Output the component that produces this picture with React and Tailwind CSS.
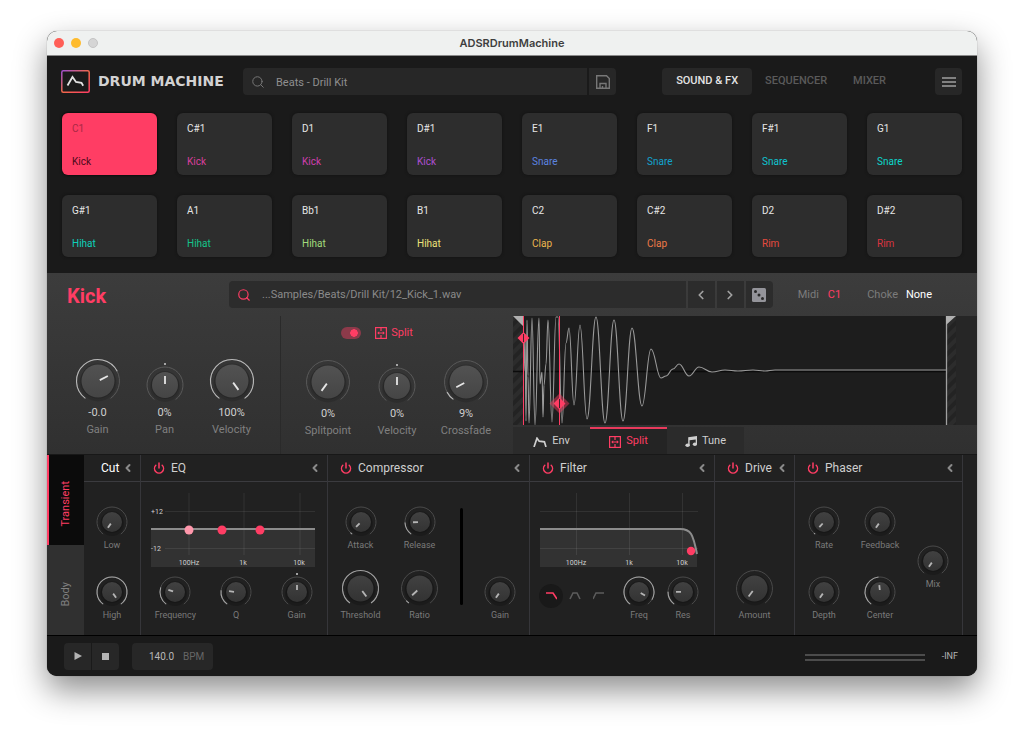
import React, { useState } from 'react'
import { Search, ChevronLeft, ChevronRight, Power } from 'lucide-react'

const pads = [
  { note: 'C1', name: 'Kick', color: 'text-[#4a0a1a]' },
  { note: 'C#1', name: 'Kick', color: 'text-[#d93f9c]' },
  { note: 'D1', name: 'Kick', color: 'text-[#cf3fae]' },
  { note: 'D#1', name: 'Kick', color: 'text-[#ae4fd0]' },
  { note: 'E1', name: 'Snare', color: 'text-[#5b84e0]' },
  { note: 'F1', name: 'Snare', color: 'text-[#12a3cf]' },
  { note: 'F#1', name: 'Snare', color: 'text-[#0fc3d0]' },
  { note: 'G1', name: 'Snare', color: 'text-[#0cd6cb]' },
  { note: 'G#1', name: 'Hihat', color: 'text-[#0ed0bb]' },
  { note: 'A1', name: 'Hihat', color: 'text-[#14c48a]' },
  { note: 'Bb1', name: 'Hihat', color: 'text-[#a2dc7c]' },
  { note: 'B1', name: 'Hihat', color: 'text-[#ece27a]' },
  { note: 'C2', name: 'Clap', color: 'text-[#ecb54e]' },
  { note: 'C#2', name: 'Clap', color: 'text-[#ee7a48]' },
  { note: 'D2', name: 'Rim', color: 'text-[#e64a3e]' },
  { note: 'D#2', name: 'Rim', color: 'text-[#dc3440]' },
]

// turning points of the sample, joined by smooth half waves
const wavePoints = [
  [11, 55], [12, 20], [13, 105], [14, 4], [15, 60], [16, 107], [19, 2], [22, 109], [26, 2],
  [27, 68], [29, 56], [30, 101], [31, 69], [33, 48], [35, 4], [39, 106], [43, 1], [45, 1], [49, 107],
  [53, 27], [56, 12], [61, 89], [67, 9], [74, 103], [83, 1], [92, 107], [101, 4], [110, 105],
  [119, 12], [129, 90], [138, 33], [148, 62], [153, 60], [160, 53], [166, 48], [176, 60],
  [186, 51], [199, 56], [212, 54], [225, 55], [240, 54], [252, 55], [262, 54], [433, 54],
]

const wavePath = wavePoints.reduce((d, [x, y], i) => {
  if (i === 0) return `M${x} ${y}`
  const [px, py] = wavePoints[i - 1]
  const h = (x - px) * 0.42
  return `${d}C${px + h} ${py} ${x - h} ${y} ${x} ${y}`
}, '')

const polar = (c, r, deg) => {
  const a = (deg * Math.PI) / 180
  return [c + r * Math.sin(a), c - r * Math.cos(a)]
}

const arc = (c, r, from, to) => {
  const [x1, y1] = polar(c, r, from)
  const [x2, y2] = polar(c, r, to)
  return `M${x1} ${y1}A${r} ${r} 0 ${to - from > 180 ? 1 : 0} 1 ${x2} ${y2}`
}

const knobSizes = {
  lg: { box: 46, r: 21.5, disc: 16.5, from: 2, to: 11 },
  md: { box: 38, r: 18, disc: 13, from: 1, to: 9 },
  panelLg: { box: 39, r: 18, disc: 13, from: 3, to: 10 },
  panel: { box: 32, r: 15, disc: 10, from: 2, to: 7 },
}

const Knob = ({ label, initial = 0, size = 'panel', bipolar = false, readout }) => {
  const [value, setValue] = useState(initial)
  const { box, r, disc, from, to } = knobSizes[size]
  const c = box / 2
  const angle = -144 + value * 288
  const [x1, y1] = polar(c, from, angle)
  const [x2, y2] = polar(c, to, angle)
  const main = size === 'lg' || size === 'md'

  return (
    <label className="relative flex flex-col items-center">
      <svg width={box} height={box} className="overflow-visible">
        <circle cx={c} cy={c + 2} r={disc + 2} fill="#000" opacity={main ? 0.12 : 0.18} />
        <circle cx={c} cy={c} r={disc + 1} fill="#000" opacity="0.15" />
        <path d={arc(c, r, -144, 144)} fill="none" stroke={main ? '#595959' : '#4a4a4a'} strokeWidth="1" />
        {!bipolar && value > 0.01 && (
          <path d={arc(c, r, -144, angle)} fill="none" stroke={main ? '#b8b8b8' : '#a2a2a2'} strokeWidth="1.1" />
        )}
        {bipolar && <circle cx={c} cy={c - r - 3} r="1" fill="#ccc" />}
        <circle cx={c} cy={c} r={disc} fill={main ? 'url(#knobMain)' : 'url(#knobPanel)'} />
        <line x1={x1} y1={y1} x2={x2} y2={y2} stroke={main ? '#e6e6e6' : '#b5b5b5'} strokeWidth="1.8" />
      </svg>
      <input
        type="range"
        min="0"
        max="1"
        step="0.01"
        value={value}
        onChange={(e) => setValue(Number(e.target.value))}
        className="sr-only"
      />
      {readout && <span className="text-[11px] leading-[17px] text-[#cfcfcf]">{readout(value)}</span>}
      <span className={main ? 'text-[11px] leading-[17px] text-[#808080]' : 'text-[9px] leading-[14px] text-[#7a7a7a]'}>
        {label}
      </span>
    </label>
  )
}

const SplitIcon = () => (
  <svg width="12" height="12" viewBox="0 0 12 12" fill="none" stroke="currentColor">
    <rect x="0.6" y="0.6" width="10.8" height="10.8" strokeWidth="1.2" />
    <path d="M6 1v3M6 8v3M3 6h6" strokeWidth="1.2" />
    <path d="M2.2 6 4.2 4.2v3.6zM9.8 6 7.8 4.2v3.6z" fill="currentColor" stroke="none" />
  </svg>
)

const EnvIcon = () => (
  <svg width="14" height="10" viewBox="0 0 14 10" fill="none" stroke="currentColor" strokeWidth="1.7">
    <path d="M1 10 4 1.2 6.2 4.2 11.4 4.8 13 10" />
  </svg>
)

const TuneIcon = () => (
  <svg width="12" height="11" viewBox="0 0 12 11" fill="currentColor">
    <path d="M3.2 1.2 12 0v8.2h-1.3V3.4L4.6 4.2v5H3.2z" />
    <ellipse cx="2.6" cy="9.2" rx="2.2" ry="1.8" />
    <ellipse cx="9.9" cy="8.3" rx="2.1" ry="1.8" />
  </svg>
)

const Panel = ({ title, power = true, children }) => {
  const [on, setOn] = useState(true)
  return (
    <section className="flex flex-col border-r border-[#36363a]">
      <header className="flex h-[27px] items-center border-b border-[#3b3b3f] pr-[10px]">
        {power ? (
          <button
            aria-label={`${title} power`}
            onClick={() => setOn(!on)}
            className={on ? 'ml-3 mr-[6px] text-[#ff3d64]' : 'ml-3 mr-[6px] text-[#666]'}
          >
            <Power size={12} strokeWidth={3} />
          </button>
        ) : (
          <span className="w-[17px]" />
        )}
        <h2 className={power ? 'flex-1 text-[12px] text-[#cfcfcf]' : 'flex-1 text-[12px] text-white'}>{title}</h2>
        <button aria-label={`Collapse ${title}`} className="-mr-1 text-[#8a8a8a]">
          <ChevronLeft size={12} strokeWidth={4} />
        </button>
      </header>
      {children}
    </section>
  )
}

const GraphText = ({ x, y, children }) => (
  <text x={x} y={y} textAnchor="middle" fontSize="7" fill="#d0d0d0">
    {children}
  </text>
)

const EqGraph = () => (
  <svg viewBox="0 0 164 76" className="ml-[10px] mt-[9px] h-[76px] w-[164px] overflow-visible">
    <rect y="38" width="164" height="38" fill="#323232" />
    <path d="M38 2v62M93 2v62M149 2v62M14 20.5H164M14 57.5H164" stroke="#fff" strokeOpacity="0.08" />
    <path d="M0 38H164" stroke="#8c8c8c" strokeWidth="2" />
    <circle cx="38" cy="39" r="4.5" fill="#ff97ab" />
    <circle cx="71" cy="39" r="4.5" fill="#ff3d64" />
    <circle cx="109" cy="39" r="4.5" fill="#ff3d64" />
    <GraphText x="6" y="23">+12</GraphText>
    <GraphText x="5" y="60">-12</GraphText>
    <GraphText x="38" y="74">100Hz</GraphText>
    <GraphText x="92" y="74">1k</GraphText>
    <GraphText x="148" y="74">10k</GraphText>
  </svg>
)

const FilterGraph = () => (
  <svg viewBox="0 0 158 76" className="ml-[10px] mt-[9px] h-[76px] w-[158px] overflow-visible">
    <path d="M0 38H140C151 38 153 43 157 63V76H0Z" fill="#323232" />
    <path d="M36.5 2v62M89.5 2v62M142.5 2v62M0 20.5H158M0 57.5H158" stroke="#fff" strokeOpacity="0.08" />
    <path d="M0 38H140C151 38 153 43 157 63" fill="none" stroke="#8c8c8c" strokeWidth="2" />
    <circle cx="151" cy="60" r="4.2" fill="#ff3d64" />
    <GraphText x="36" y="74">100Hz</GraphText>
    <GraphText x="89" y="74">1k</GraphText>
    <GraphText x="142" y="74">10k</GraphText>
  </svg>
)

const filterTypes = [
  { name: 'Low pass', d: 'M1 2h7l4 6' },
  { name: 'Band pass', d: 'M1 8l3-6h4l3 6' },
  { name: 'High pass', d: 'M0 8l3-6h8' },
]

const FilterTypes = () => {
  const [active, setActive] = useState('Low pass')
  return (
    <div className="mt-[17px] flex">
      {filterTypes.map((t) => (
        <button
          key={t.name}
          aria-label={t.name}
          onClick={() => setActive(t.name)}
          className={
            active === t.name
              ? 'flex size-6 items-center justify-center rounded-full bg-[#191919] text-[#ff3d64]'
              : 'flex size-6 items-center justify-center rounded-full text-[#5c5c5c]'
          }
        >
          <svg width="12" height="10" viewBox="0 0 12 10" fill="none" stroke="currentColor" strokeWidth="1.6">
            <path d={t.d} />
          </svg>
        </button>
      ))}
    </div>
  )
}

const Header = () => {
  const [view, setView] = useState('SOUND & FX')
  return (
    <div className="flex items-center px-[15px]">
      <svg width="29" height="23" viewBox="0 0 29 23" fill="none" className="-ml-px">
        <rect x="0.8" y="0.8" width="27.4" height="21.4" rx="1.5" stroke="url(#logoEdge)" strokeWidth="1.5" />
        <path d="M6.5 15.5 11.5 7l3.5 5 5.500.8 1.700 3" stroke="#e2e2e2" strokeWidth="1.8" />
      </svg>
      <h1 className="ml-2 w-[145px] whitespace-nowrap font-['DejaVu_Sans'] text-[14px] font-bold text-[#d2d2d2]">
        DRUM MACHINE
      </h1>
      <div className="flex h-[27px] flex-1 items-center rounded-l bg-[#272727] pl-2">
        <Search size={14} strokeWidth={1.7} className="text-[#777]" />
        <input
          aria-label="Preset"
          defaultValue="Beats - Drill Kit"
          className="ml-[11px] h-full min-w-0 flex-1 bg-transparent pt-px text-[11px] text-[#8f8f8f] outline-none"
        />
      </div>
      <button aria-label="Save" className="ml-0.5 flex h-[27px] w-[27px] items-center justify-center rounded-r bg-[#272727] text-[#777]">
        <svg width="14" height="14" viewBox="0 0 14 14" fill="none" stroke="currentColor" strokeWidth="1.4">
          <path d="M.7.7h9.800l2.800 2.800v9.800H.7zM4 13V8.500h6V13M6.500 13v-2" />
        </svg>
      </button>
      <nav className="ml-[46px] flex">
        {['SOUND & FX', 'SEQUENCER', 'MIXER'].map((v) => (
          <button
            key={v}
            onClick={() => setView(v)}
            className={
              view === v
                ? 'h-[27px] rounded bg-[#272727] px-[14px] text-[11px] font-medium text-[#e4e4e4]'
                : 'h-[27px] rounded px-[13px] text-[11px] font-medium text-[#5a5a5a]'
            }
          >
            {v}
          </button>
        ))}
      </nav>
      <button aria-label="Menu" className="ml-9 flex h-[27px] w-[27px] items-center justify-center rounded bg-[#272727] text-[#a0a0a0]">
        <svg width="14" height="10" viewBox="0 0 14 10" stroke="currentColor" strokeWidth="1.3">
          <path d="M0 1h14M0 5h14M0 9h14" />
        </svg>
      </button>
    </div>
  )
}

const Waveform = () => (
  <svg viewBox="0 0 464 109" preserveAspectRatio="none" className="block h-[109px] w-full bg-[#1d1d1d]">
    <defs>
      <pattern id="hatch" width="8" height="8" patternUnits="userSpaceOnUse" patternTransform="rotate(45)">
        <rect width="8" height="8" fill="#232323" />
        <rect width="4" height="8" fill="#2c2c2c" />
      </pattern>
    </defs>
    <rect width="10" height="109" fill="url(#hatch)" />
    <rect x="433" width="10" height="109" fill="url(#hatch)" />
    <rect x="443" width="21" height="109" fill="#262626" />
    <path d="M0 55.5H433" stroke="#0b0b0b" strokeWidth="1.5" />
    <path d={wavePath} fill="none" stroke="#9a9a9a" strokeWidth="1.1" />
    <path d="M433.5 0V109" stroke="#a0a0a0" strokeWidth="1.3" />
    <path d="M0 0H10V10ZM433 0h10l-10 9Z" fill="#b0b0b0" />
    <path d="M10.5 0V109M46.5 0V109" stroke="#ff3d64" strokeWidth="1" />
    <path d="M46.5 77.5l10 10-10 10-10-10Z" fill="#ff3d64" opacity="0.45" />
    <path d="M10.5 16l6 6-6 6-6-6ZM46.5 81.5l6 6-6 6-6-6Z" fill="#ff3d64" />
    <path d="M10.5 18v8M46.5 83v9" stroke="#40202a" strokeWidth="1" />
  </svg>
)

const SampleSection = () => {
  const [split, setSplit] = useState(true)
  const [tab, setTab] = useState('Split')
  const tabs = [
    { name: 'Env', icon: <EnvIcon /> },
    { name: 'Split', icon: <SplitIcon /> },
    { name: 'Tune', icon: <TuneIcon /> },
  ]
  const percent = (v) => `${Math.round(v * 100)}%`
  const centred = (v) => `${Math.round((v - 0.5) * 200)}%`

  return (
    <div className="bg-linear-to-b from-[#3c3c3c] to-[#303030]">
      <div className="flex h-[43px] items-center pl-5 pr-11">
        <h2 className="w-[162px] pt-0.5 text-[20px] font-bold text-[#ff3d64]">Kick</h2>
        <div className="flex h-[27px] flex-1 items-center rounded-l bg-[#2c2c2c] pl-2">
          <Search size={14} strokeWidth={2} className="text-[#ff3d64]" />
          <input
            aria-label="Sample"
            defaultValue="...Samples/Beats/Drill Kit/12_Kick_1.wav"
            className="ml-[11px] h-full min-w-0 flex-1 bg-transparent text-[11px] text-[#8a8a8a] outline-none"
          />
        </div>
        <button aria-label="Previous sample" className="ml-0.5 flex h-[27px] w-[27px] items-center justify-center bg-[#2c2c2c] text-[#a0a0a0]">
          <ChevronLeft size={14} strokeWidth={3} />
        </button>
        <button aria-label="Next sample" className="ml-0.5 flex h-[27px] w-[27px] items-center justify-center bg-[#2c2c2c] text-[#a0a0a0]">
          <ChevronRight size={14} strokeWidth={3} />
        </button>
        <button aria-label="Random sample" className="ml-0.5 flex h-[27px] w-[27px] items-center justify-center rounded-r bg-[#2c2c2c]">
          <svg width="14" height="14" viewBox="0 0 14 14" fill="#2a2a2a">
            <rect width="14" height="14" rx="1.5" fill="#94949a" />
            <circle cx="3.5" cy="3.5" r="1.5" />
            <circle cx="7" cy="7" r="1.5" />
            <circle cx="10.5" cy="10.5" r="1.5" />
          </svg>
        </button>
        <div className="flex items-center pt-0.5 text-[11px]">
          <span className="ml-[25px] text-[#7c7c7c]">Midi</span>
          <button className="ml-[9px] text-[#ff3d64]">C1</button>
          <label htmlFor="choke" className="ml-[26px] text-[#7c7c7c]">Choke</label>
          <select id="choke" className="ml-2 appearance-none bg-transparent text-white">
            <option>None</option>
            <option>1</option>
            <option>2</option>
          </select>
        </div>
      </div>
      <div className="grid h-[138px] grid-cols-[233fr_233fr_464fr]">
        <div className="flex items-end justify-center pb-4 pl-0.5">
          <div className="grid grid-cols-[67px_67px_67px] items-end">
            <Knob label="Gain" initial={0.72} size="lg" readout={(v) => (v === 0.72 ? '-0.0' : ((v - 0.72) * 40).toFixed(1))} />
            <Knob label="Pan" initial={0.5} size="md" bipolar readout={centred} />
            <Knob label="Velocity" initial={1} size="lg" readout={percent} />
          </div>
        </div>
        <div className="flex flex-col items-center justify-between border-l border-[#2a2a2a] pb-[15px] pt-[9px]">
          <div className="-ml-10 flex items-center gap-[14px]">
            <input
              id="split"
              type="checkbox"
              checked={split}
              onChange={() => setSplit(!split)}
              className="h-3 w-5 appearance-none rounded-full bg-[#8c3a4a] bg-[radial-gradient(circle_at_13px_6px,#ff3d64_3.5px,transparent_4px)] not-checked:bg-[#555]"
            />
            <label htmlFor="split" className="flex items-center gap-1 text-[11px] text-[#ff3d64]">
              <SplitIcon /> Split
            </label>
          </div>
          <div className="grid grid-cols-[69px_69px_69px] items-end">
            <Knob label="Splitpoint" size="lg" readout={percent} />
            <Knob label="Velocity" initial={0.5} size="md" bipolar readout={centred} />
            <Knob label="Crossfade" initial={0.09} size="lg" readout={percent} />
          </div>
        </div>
        <div className="flex flex-col">
          <Waveform />
          <div className="mt-0.5 flex flex-1">
            {tabs.map((t) => (
              <button
                key={t.name}
                onClick={() => setTab(t.name)}
                className={
                  tab === t.name
                    ? 'flex w-[77px] items-center justify-center gap-[5px] border-t-2 border-[#e83a5c] bg-[#242424] text-[11px] text-[#ff3d64]'
                    : 'flex w-[77px] items-center justify-center gap-[5px] border-t-2 border-transparent bg-[#2b2b2b] text-[11px] text-[#cfcfcf]'
                }
              >
                {t.icon}
                {t.name}
              </button>
            ))}
          </div>
        </div>
      </div>
    </div>
  )
}

const Effects = () => {
  const [layer, setLayer] = useState('Transient')
  return (
    <div className="flex h-[182px] border-y border-t-[#181818] border-b-black bg-[#212121]">
      <div className="flex w-[37px] flex-col">
        {['Transient', 'Body'].map((l) => (
          <button
            key={l}
            onClick={() => setLayer(l)}
            className={
              layer === l
                ? 'flex flex-1 items-center justify-center border-l-2 border-[#ff3d64] bg-[#0b0b0b] pt-2 text-[11px] text-[#ff3d64]'
                : 'flex flex-1 items-center justify-center border-l-2 border-transparent bg-[#303030] pt-2 text-[11px] text-[#808080]'
            }
          >
            <span className="rotate-180 [writing-mode:vertical-rl]">{l}</span>
          </button>
        ))}
      </div>
      <div className="grid flex-1 grid-cols-[57fr_187fr_202fr_185fr_80fr_168fr_14fr]">
        <Panel title="Cut" power={false}>
          <div className="flex flex-1 flex-col justify-between pb-[13px] pt-6">
            <Knob label="Low" />
            <Knob label="High" initial={1} />
          </div>
        </Panel>
        <Panel title="EQ">
          <EqGraph />
          <div className="mt-[9px] grid grid-cols-3 pl-1">
            <Knob label="Frequency" initial={0.25} />
            <Knob label="Q" initial={0.21} />
            <Knob label="Gain" initial={0.5} bipolar />
          </div>
        </Panel>
        <Panel title="Compressor">
          <div className="flex flex-1 pb-[13px] pl-[3px] pt-6">
            <div className="grid w-[118px] grid-cols-2 content-between items-end">
              <Knob label="Attack" initial={0.03} />
              <Knob label="Release" initial={0.18} />
              <Knob label="Threshold" initial={1} size="panelLg" />
              <Knob label="Ratio" initial={0.04} size="panelLg" />
            </div>
            <div className="ml-[11px] mt-0.5 h-[97px] w-[3px] rounded-full bg-black" />
            <div className="flex flex-1 items-end justify-center pl-2">
              <Knob label="Gain" />
            </div>
          </div>
        </Panel>
        <Panel title="Filter">
          <FilterGraph />
          <div className="flex pl-[9px]">
            <FilterTypes />
            <div className="ml-[6px] mt-[9px] grid grid-cols-[44px_44px]">
              <Knob label="Freq" initial={0.92} />
              <Knob label="Res" initial={0.19} />
            </div>
          </div>
        </Panel>
        <Panel title="Drive">
          <div className="flex flex-1 items-end justify-center pb-[13px]">
            <Knob label="Amount" size="panelLg" />
          </div>
        </Panel>
        <Panel title="Phaser">
          <div className="flex flex-1 items-center pb-[13px] pl-px pr-1 pt-6">
            <div className="grid w-[112px] grid-cols-2 content-between self-stretch">
              <Knob label="Rate" initial={0.02} />
              <Knob label="Feedback" />
              <Knob label="Depth" />
              <Knob label="Center" initial={0.48} />
            </div>
            <div className="flex flex-1 justify-center pt-2">
              <Knob label="Mix" />
            </div>
          </div>
        </Panel>
      </div>
    </div>
  )
}

const Transport = () => (
  <footer className="flex h-10 items-center bg-[#1a1a1a] pl-[17px] pr-[19px]">
    <button aria-label="Play" className="flex h-[27px] w-[27px] items-center justify-center rounded-l bg-[#272727]">
      <svg width="8" height="8" viewBox="0 0 8 8" fill="#b4b4b4">
        <path d="M.5 0 8 4 .5 8z" />
      </svg>
    </button>
    <button aria-label="Stop" className="ml-px flex h-[27px] w-[27px] items-center justify-center rounded-r bg-[#272727]">
      <span className="size-[7px] bg-[#b4b4b4]" />
    </button>
    <label className="ml-[13px] flex h-[27px] w-[81px] items-center rounded bg-[#272727] pl-[17px] text-[10px] text-[#666]">
      <input defaultValue="140.0" className="h-full w-[34px] bg-transparent text-[#b8b8b8] outline-none" />
      BPM
    </label>
    <div className="ml-auto mr-[17px] flex w-[120px] flex-col gap-[3px] pt-0.5">
      <div className="h-0.5 bg-[#4c4c4c]" />
      <div className="h-0.5 bg-[#4c4c4c]" />
    </div>
    <span className="pt-0.5 text-[9px] text-[#b4b4b4]">-INF</span>
  </footer>
)

const App = () => {
  const [activePad, setActivePad] = useState('C1')

  return (
    <div className="min-h-screen bg-white px-[47px] pb-[62px] pt-[31px] font-['Roboto',sans-serif]">
      {/* shared gradients */}
      <svg width="0" height="0" className="absolute">
        <defs>
          <linearGradient id="knobMain" x1="0" y1="0" x2="0" y2="1">
            <stop offset="0" stopColor="#525252" />
            <stop offset="1" stopColor="#454545" />
          </linearGradient>
          <linearGradient id="knobPanel" x1="0" y1="0" x2="0" y2="1">
            <stop offset="0" stopColor="#414141" />
            <stop offset="1" stopColor="#333333" />
          </linearGradient>
          <linearGradient id="logoEdge" x1="0" y1="0" x2="1" y2="1">
            <stop offset="0" stopColor="#a04fd0" />
            <stop offset="0.5" stopColor="#f0694a" />
            <stop offset="1" stopColor="#ff3d64" />
          </linearGradient>
        </defs>
      </svg>
      <div className="overflow-hidden rounded-[10px] bg-[#1a1a1a] shadow-[0_0_1px_rgba(0,0,0,0.5),0_14px_32px_rgba(0,0,0,0.45)]">
        <div className="grid h-[25px] grid-cols-3 items-center border-b border-[#8a8a8a] bg-[#eff1f0] px-[7px]">
          <div className="flex gap-[7px]">
            <span className="size-[10px] rounded-full bg-[#ff5f57]" />
            <span className="size-[10px] rounded-full bg-[#febb2e]" />
            <span className="size-[10px] rounded-full border border-[#c4c4c4] bg-[#d5d5d5]" />
          </div>
          <p className="text-center font-['Inter'] text-[11px] font-semibold text-[#3e3e3e]">ADSRDrumMachine</p>
        </div>
        <div className="pb-4 pt-3">
          <Header />
          <div className="mt-[18px] grid grid-cols-8 gap-5 px-[15px]">
            {pads.map((p) => (
              <button
                key={p.note}
                onClick={() => setActivePad(p.note)}
                className={
                  activePad === p.note
                    ? 'flex h-[62px] flex-col justify-between rounded-md bg-[#ff3d64] px-[10px] pb-[6px] pt-[9px] text-left text-[10px] leading-[14px] shadow-[0_0_3px_#000]'
                    : 'flex h-[62px] flex-col justify-between rounded-md bg-[#2d2d2d] px-[10px] pb-[6px] pt-[9px] text-left text-[10px] leading-[14px] shadow-[0_0_3px_#111]'
                }
              >
                <span className={activePad === p.note ? 'text-[#a82844]' : 'text-[#e6e6e6]'}>{p.note}</span>
                <span className={p.color}>{p.name}</span>
              </button>
            ))}
          </div>
        </div>
        <SampleSection />
        <Effects />
        <Transport />
      </div>
    </div>
  )
}

export default App
